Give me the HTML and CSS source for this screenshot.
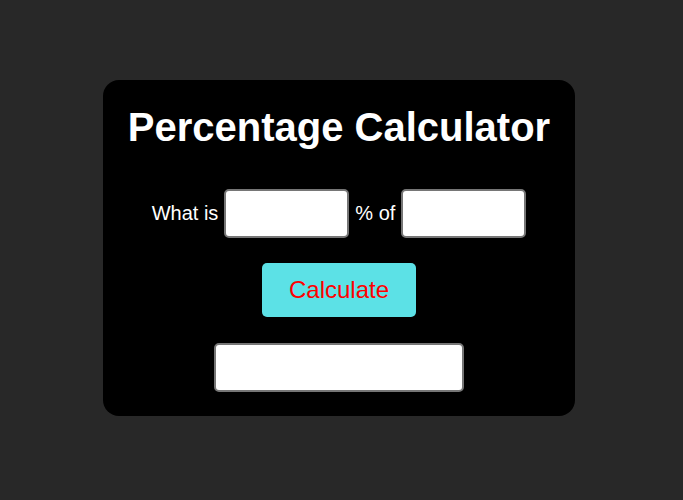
FILE: index.html
```html
<!DOCTYPE html>
<html>
<head>
<meta charset="utf-8">
<link rel="stylesheet" href="styles.css">
</head>
<body>
<main class="page">
  <section class="card">
    <h1 class="title">Percentage Calculator</h1>
    <div class="row">
      <span class="label">What is</span>
      <input class="field" type="text">
      <span class="label">% of</span>
      <input class="field" type="text">
    </div>
    <button class="calc">Calculate</button>
    <input class="result" type="text" readonly>
  </section>
</main>
</body>
</html>
```
FILE: styles.css
```css
html, body {
  margin: 0;
  padding: 0;
  height: 100%;
  background: #282828;
  font-family: "Liberation Sans", Arial, sans-serif;
}
.page {
  height: 500px;
  display: flex;
  align-items: center;
  justify-content: center;
}
.card {
  box-sizing: border-box;
  width: 472px;
  height: 336px;
  margin-right: 5px;
  margin-bottom: 4px;
  background: #000;
  border-radius: 16px;
  padding: 24px 0 24px;
  display: flex;
  flex-direction: column;
  align-items: center;
}
.title {
  margin: 0;
  color: #fff;
  font-size: 40px;
  font-weight: bold;
  line-height: 46px;
}
.row {
  margin-top: 39px;
  display: flex;
  align-items: center;
  gap: 6px;
  color: #fff;
  font-size: 20px;
}
.field {
  box-sizing: border-box;
  width: 125px;
  height: 49px;
  border: 2px solid #767676;
  border-radius: 5px;
  background: #fff;
  font-size: 20px;
}
.calc {
  margin-top: 25px;
  box-sizing: border-box;
  width: 154px;
  height: 54px;
  border: none;
  border-radius: 5px;
  background: #5ce1e6;
  color: #ff0000;
  font-family: "Liberation Sans", Arial, sans-serif;
  font-size: 24px;
  padding: 0;
}
.result {
  margin-top: 26px;
  box-sizing: border-box;
  width: 250px;
  height: 49px;
  border: 2px solid #767676;
  border-radius: 5px;
  background: #fff;
  font-size: 20px;
}
```
